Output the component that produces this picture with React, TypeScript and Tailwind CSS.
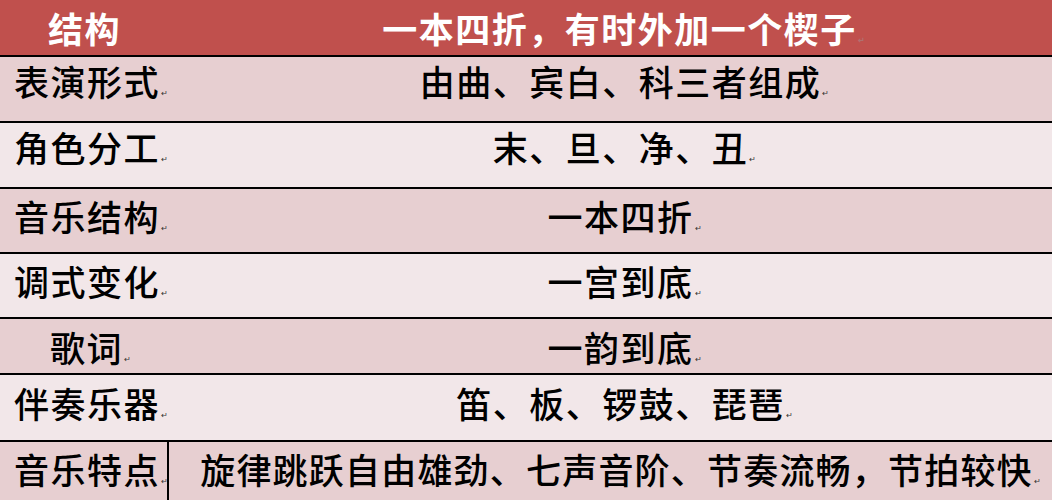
import React from 'react';

const rows = [
  { label: '表演形式', value: '由曲、宾白、科三者组成', h: 'h-[64px]', pt: 'pt-[6px]', bg: 'bg-[#e7cfd1]', indent: false },
  { label: '角色分工', value: '末、旦、净、丑', h: 'h-[64px]', pt: 'pt-[6px]', bg: 'bg-[#f2e7e9]', indent: false },
  { label: '音乐结构', value: '一本四折', h: 'h-[63px]', pt: 'pt-[9px]', bg: 'bg-[#e7cfd1]', indent: false },
  { label: '调式变化', value: '一宫到底', h: 'h-[63px]', pt: 'pt-[9px]', bg: 'bg-[#f2e7e9]', indent: false },
  { label: '歌词', value: '一韵到底', h: 'h-[54px]', pt: 'pt-[10px]', bg: 'bg-[#e7cfd1]', indent: true },
  { label: '伴奏乐器', value: '笛、板、锣鼓、琵琶', h: 'h-[65px]', pt: 'pt-[10px]', bg: 'bg-[#f2e7e9]', indent: false },
];

// 段落标记
function Mark({ light }: { light?: boolean }) {
  return (
    <span className={`ml-[1px] text-[8px] tracking-normal leading-none align-baseline ${light ? 'text-[#b07070]' : 'text-[#333]'}`}>↵</span>
  );
}

export default function App() {
  return (
    <div className="w-[1052px] h-[500px] overflow-hidden bg-white font-['Noto_Sans_CJK_SC',_'Noto_Sans',_sans-serif] text-[35px] tracking-[1.5px] leading-[35px] text-black">
      <div className="flex flex-col">
        {/* 表头 */}
        <div className="flex h-[55px] items-center bg-[#c0504d] text-white font-bold">
          <div className="w-[169px] pl-[48px] whitespace-nowrap">结构</div>
          <div className="flex-1 text-center pl-[26px] whitespace-nowrap">
            一本四折，有时外加一个楔子<Mark light />
          </div>
        </div>
        <div className="h-[2px] bg-black" />

        {rows.map((r) => (
          <React.Fragment key={r.label}>
            <div className={`flex ${r.h} ${r.pt} ${r.bg} font-medium`}>
              <div className={`w-[169px] shrink-0 whitespace-nowrap ${r.indent ? 'pl-[50px]' : 'pl-[14px]'}`}>
                {r.label}<Mark />
              </div>
              <div className="flex-1 text-center pl-[28px] whitespace-nowrap">
                {r.value}<Mark />
              </div>
            </div>
            <div className="h-[2px] bg-black" />
          </React.Fragment>
        ))}

        {/* 最后一行 */}
        <div className="flex h-[58px] bg-[#e7cfd1] font-medium">
          <div className="w-[169px] shrink-0 whitespace-nowrap pl-[14px] pt-[9px] border-r-[2px] border-black">
            音乐特点<Mark />
          </div>
          <div className="flex-1 text-center pt-[9px] pl-[20px] whitespace-nowrap tracking-[1.2px]">
            旋律跳跃自由雄劲、七声音阶、节奏流畅，节拍较快<Mark />
          </div>
        </div>
      </div>
    </div>
  );
}
